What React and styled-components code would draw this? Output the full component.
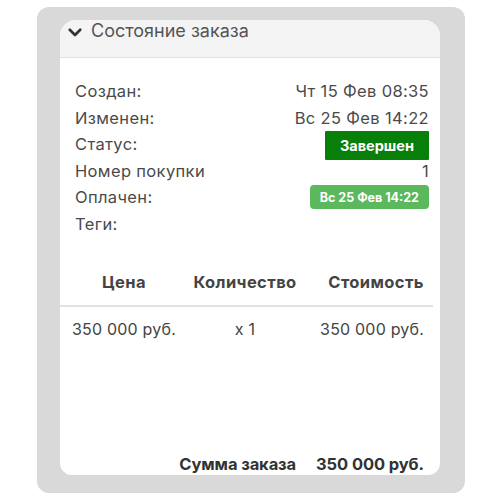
import React from 'react';
import styled, { createGlobalStyle } from 'styled-components';

const Global = createGlobalStyle`
  body {
    margin: 0;
    background: #fff;
    font-family: Inter, 'Noto Sans', sans-serif;
  }
`;

const Frame = styled.div`
  margin: 7px 0 0 37px;
  width: 428px;
  height: 486px;
  box-sizing: border-box;
  background: #d9d9d9;
  border-radius: 12px;
  padding: 13px 25px 0 23px;
`;

const Card = styled.div`
  width: 380px;
  height: 455px;
  background: #fff;
  border-radius: 16px 16px 12px 12px;
  overflow: hidden;
  display: flex;
  flex-direction: column;
`;

const Header = styled.div`
  height: 36px;
  background: #f4f4f4;
  border-bottom: 1px solid #e2e2e2;
  display: flex;
  align-items: flex-start;
  gap: 7px;
  padding: 1px 0 0 6px;
  color: #555;
  font-size: 18px;
  line-height: 20px;
  svg {
    margin-top: 2px;
  }
`;

const Info = styled.div`
  padding: 20px 11px 0 15px;
  display: flex;
  flex-direction: column;
`;

const Row = styled.div`
  height: 26.5px;
  display: flex;
  align-items: center;
  justify-content: space-between;
  font-size: 16.5px;
  letter-spacing: 0.35px;
  color: #4a4a4a;
`;

const Badge = styled.span`
  background: ${p => (p.$light ? '#5cb85c' : '#087f08')};
  color: #fff;
  font-weight: 700;
  letter-spacing: 0;
  font-size: ${p => (p.$light ? '12.5px' : '14.5px')};
  height: ${p => (p.$light ? '24px' : '29px')};
  padding: 0 ${p => (p.$light ? '10px' : '15px')};
  border-radius: ${p => (p.$light ? '4px' : '1px')};
  display: inline-flex;
  align-items: center;
  margin-top: ${p => (p.$light ? '0' : '3px')};
`;

const Table = styled.table`
  margin-top: 21px;
  width: 373px;
  border-collapse: collapse;
  color: #444;
  th {
    font-weight: 700;
    font-size: 16.5px;
    letter-spacing: 0.4px;
    height: 47px;
    border-bottom: 2px solid #e2e2e2;
    padding: 0;
  }
  td {
    font-size: 16px;
    letter-spacing: 0.2px;
    height: 43px;
    padding: 0;
  }
`;

const Cell = styled.td`
  text-align: ${p => p.$align || 'center'};
  padding-right: ${p => (p.$align === 'right' ? '9px' : '0')} !important;
  width: ${p => p.$w || 'auto'};
`;

const Head = styled.th`
  text-align: ${p => p.$align || 'center'};
  padding-right: ${p => (p.$align === 'right' ? '9px' : '0')} !important;
  width: ${p => p.$w || 'auto'};
`;

const Footer = styled.div`
  margin-top: auto;
  padding: 0 16px 1px 0;
  display: flex;
  justify-content: flex-end;
  gap: 20px;
  font-weight: 700;
  font-size: 16.5px;
  letter-spacing: -0.1px;
  color: #333;
`;

const Chevron = () => (
  <svg width="18" height="18" viewBox="0 0 24 24" fill="none" stroke="#333" strokeWidth="3.6" strokeLinecap="round" strokeLinejoin="round">
    <path d="M5 9l7 7 7-7" />
  </svg>
);

export default function App() {
  return (
    <>
      <Global />
      <Frame>
        <Card>
          <Header>
            <Chevron />
            Состояние заказа
          </Header>
          <Info>
            <Row><span>Создан:</span><span>Чт 15 Фев 08:35</span></Row>
            <Row><span>Изменен:</span><span>Вс 25 Фев 14:22</span></Row>
            <Row><span>Статус:</span><Badge>Завершен</Badge></Row>
            <Row><span>Номер покупки</span><span>1</span></Row>
            <Row><span>Оплачен:</span><Badge $light>Вс 25 Фев 14:22</Badge></Row>
            <Row><span>Теги:</span></Row>
          </Info>
          <Table>
            <thead>
              <tr>
                <Head $w="128px">Цена</Head>
                <Head $w="114px">Количество</Head>
                <Head $align="right">Стоимость</Head>
              </tr>
            </thead>
            <tbody>
              <tr>
                <Cell>350 000 руб.</Cell>
                <Cell>x 1</Cell>
                <Cell $align="right">350 000 руб.</Cell>
              </tr>
            </tbody>
          </Table>
          <Footer>
            <span>Сумма заказа</span>
            <span>350 000 руб.</span>
          </Footer>
        </Card>
      </Frame>
    </>
  );
}
